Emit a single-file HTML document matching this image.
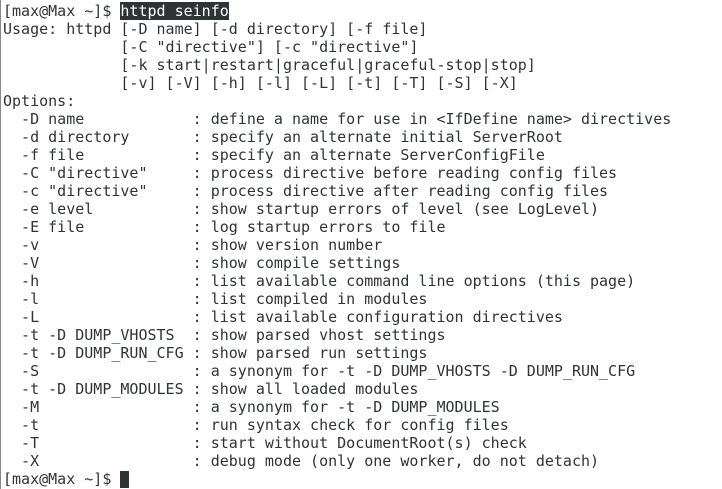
<!DOCTYPE html>
<html><head><meta charset="utf-8"><style>
html,body{margin:0;padding:0;background:#fff;width:722px;height:489px;overflow:hidden}
body{border-left:1px solid #888;box-sizing:border-box}
pre{margin:0;padding:2px 0 0 2px;font-family:"DejaVu Sans Mono","Liberation Mono",monospace;font-size:15px;line-height:18px;color:#2e3436}
.h{background:#2e3436;color:#fff}
.c{display:inline-block;width:9px;height:17px;background:#2e3436;vertical-align:-4px}
</style></head><body><pre>[max@Max ~]$ <span class="h">httpd seinfo</span>
Usage: httpd [-D name] [-d directory] [-f file]
             [-C "directive"] [-c "directive"]
             [-k start|restart|graceful|graceful-stop|stop]
             [-v] [-V] [-h] [-l] [-L] [-t] [-T] [-S] [-X]
Options:
  -D name            : define a name for use in &lt;IfDefine name&gt; directives
  -d directory       : specify an alternate initial ServerRoot
  -f file            : specify an alternate ServerConfigFile
  -C "directive"     : process directive before reading config files
  -c "directive"     : process directive after reading config files
  -e level           : show startup errors of level (see LogLevel)
  -E file            : log startup errors to file
  -v                 : show version number
  -V                 : show compile settings
  -h                 : list available command line options (this page)
  -l                 : list compiled in modules
  -L                 : list available configuration directives
  -t -D DUMP_VHOSTS  : show parsed vhost settings
  -t -D DUMP_RUN_CFG : show parsed run settings
  -S                 : a synonym for -t -D DUMP_VHOSTS -D DUMP_RUN_CFG
  -t -D DUMP_MODULES : show all loaded modules
  -M                 : a synonym for -t -D DUMP_MODULES
  -t                 : run syntax check for config files
  -T                 : start without DocumentRoot(s) check
  -X                 : debug mode (only one worker, do not detach)
[max@Max ~]$ <span class="c"></span></pre></body></html>
